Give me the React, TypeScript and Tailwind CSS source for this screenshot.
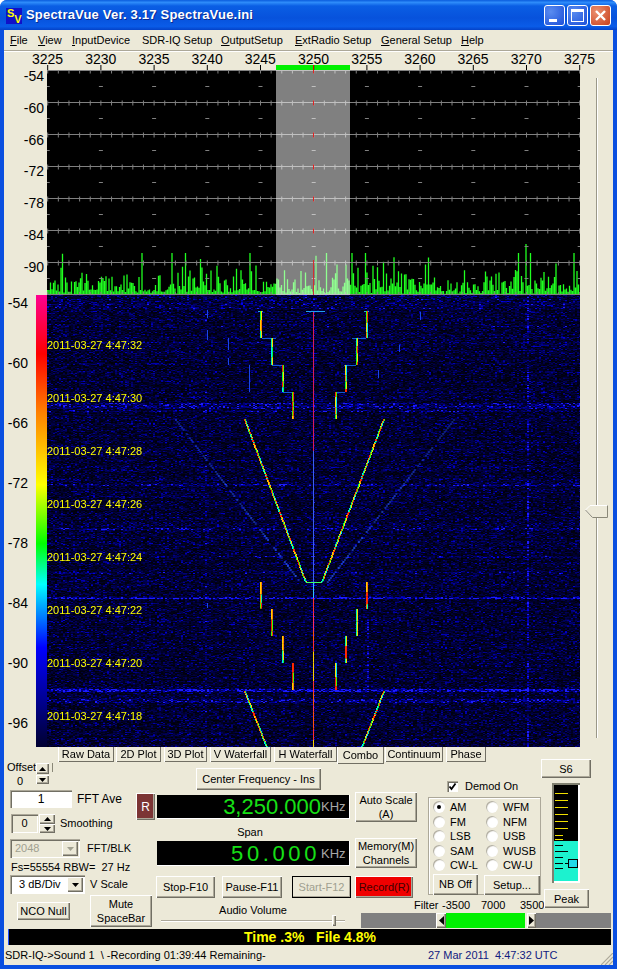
import React, { useLayoutEffect, useRef } from "react";

function rng(seed: number) {
  let a = seed;
  return () => {
    a |= 0;
    a = (a + 0x6d2b79f5) | 0;
    let t = Math.imul(a ^ (a >>> 15), 1 | a);
    t = (t + Math.imul(t ^ (t >>> 7), 61 | t)) ^ t;
    return ((t ^ (t >>> 14)) >>> 0) / 4294967296;
  };
}

const W = 533;
const H = 452;
const Y0 = 295;
const X0 = 47;
const rainbow = ["#ff2000", "#ff8000", "#ffe000", "#40ff00", "#00ffa0", "#00e0ff", "#ff3000", "#ffd000", "#00ff40"];

function bandGain(y: number) {
  const bands: [number, number, number][] = [
    [403, 408, 2.2], [410, 411, 1.6], [484, 485, 2.2], [597, 598, 3.2], [689, 691, 4.2], [699, 702, 2.2],
    [528, 529, 1.4], [556, 557, 1.3], [341, 342, 1.2], [325, 326, 1.2], [572, 573, 1.4],
  ];
  let g = 1;
  for (const [a, b, v] of bands) if (y >= a && y <= b) g = v;
  return g;
}

function colGain(x: number, y: number) {
  if (x >= 205 && x <= 206) return 1.5;
  if (x >= 526 && x <= 527) return y % 60 < 40 ? 3.2 : 1.8;
  if (x >= 313 && x <= 314) return 1.4;
  if (x >= 367 && x <= 368 && y > 620 && y < 690) return 2.4;
  return 1;
}

function drawWaterfall(c: CanvasRenderingContext2D) {
  const r = rng(4242);
  const off = document.createElement("canvas");
  off.width = W;
  off.height = H;
  const o = off.getContext("2d") as CanvasRenderingContext2D;
  o.fillStyle = "#000018";
  o.fillRect(0, 0, W, H);
  for (let py = 0; py < H; py += 1) {
    const rowG = 0.75 + r() * 0.5;
    for (let px = 0; px < W; px += 2) {
      const x = px + X0;
      const y = py + Y0;
      const v = r();
      let b = v < 0.35 ? 8 + r() * 24 : v < 0.84 ? 30 + r() * 55 : 85 + r() * 95;
      b *= rowG * bandGain(y) * colGain(x, y);
      if (py < 14) b *= 1.35;
      b = Math.min(255, b);
      const w = b > 245 ? 30 : 0;
      o.fillStyle = `rgb(${w},${w},${b | 0})`;
      o.fillRect(px, py, 2, 1);
    }
  }
  c.filter = "blur(0.55px)";
  c.drawImage(off, 0, 0);
  c.filter = "none";

  const seg = (x: number, y0: number, y1: number, s: number) => {
    const q = rng(s);
    let y = y0;
    while (y < y1) {
      const l = 4 + q() * 10;
      const k = Math.floor(q() * rainbow.length);
      c.fillStyle = rainbow[k];
      c.fillRect(x - X0, y - Y0, 1, Math.min(l, y1 - y));
      c.fillStyle = rainbow[(k + 3) % rainbow.length];
      c.fillRect(x + 1 - X0, y - Y0, 1, Math.min(l, y1 - y));
      y += l;
    }
  };
  const thin = (x: number, y0: number, y1: number, s: number) => {
    const q = rng(s);
    let y = y0;
    while (y < y1) {
      const l = 5 + q() * 14;
      c.fillStyle = ["#ff3030", "#ffd000", "#ff3060", "#e0e020", "#ff5010", "#40e080"][Math.floor(q() * 6)];
      c.fillRect(x - X0, y - Y0, 1, Math.min(l, y1 - y));
      y += l;
    }
  };
  const diag = (x0: number, y0: number, x1: number, y1: number, s: number) => {
    const q = rng(s);
    const n = Math.abs(y1 - y0);
    for (let i = 0; i < n; i += 1) {
      const k = Math.floor(i / 4 + q() * 1.5) % rainbow.length;
      const x = Math.round(x0 + ((x1 - x0) * i) / n) - X0;
      c.fillStyle = rainbow[k];
      c.fillRect(x, y0 + i - Y0, 1, 1);
      c.fillStyle = rainbow[(k + 3) % rainbow.length];
      c.fillRect(x + 1, y0 + i - Y0, 1, 1);
    }
  };
  const faint = (x0: number, y0: number, x1: number, y1: number, s: number) => {
    const q = rng(s);
    const n = Math.abs(y1 - y0);
    for (let i = 0; i < n; i += 2) {
      if (q() < 0.2) continue;
      c.fillStyle = `rgba(40,90,255,${0.35 + 0.5 * (i / n) * q()})`;
      c.fillRect(x0 + ((x1 - x0) * i) / n - X0, y0 + i - Y0, 2, 2);
    }
  };
  const fv = (x: number, y0: number, y1: number) => {
    c.fillStyle = "#1a48e8";
    c.fillRect(x - X0, y0 - Y0, 1, y1 - y0);
  };
  faint(175, 419, 300, 582, 1);
  faint(453, 419, 326, 582, 2);
  fv(207, 310, 318); fv(207, 330, 340); fv(228, 338, 350); fv(228, 358, 365); fv(249, 365, 392);
  fv(420, 312, 320); fv(399, 345, 352); fv(378, 370, 378); fv(207, 603, 608);
  // center line
  c.fillStyle = "#d81c5c";
  c.fillRect(313 - X0, 311 - Y0, 1, 140);
  c.fillStyle = "#3a60f0";
  c.fillRect(313 - X0, 451 - Y0, 1, 131);
  c.fillStyle = "#30c0ff";
  c.fillRect(313 - X0, 582 - Y0, 1, 16);
  thin(313, 598, 747, 91);
  // horizontals
  c.fillStyle = "#20a0f0";
  c.fillRect(306 - X0, 311 - Y0, 19, 1);
  c.fillRect(258 - X0, 311 - Y0, 5, 1);
  c.fillRect(364 - X0, 311 - Y0, 5, 1);
  c.fillStyle = "#1058d8";
  c.fillRect(262 - X0, 338 - Y0, 14, 1);
  c.fillRect(352 - X0, 338 - Y0, 14, 1);
  c.fillRect(272 - X0, 365 - Y0, 12, 1);
  c.fillRect(344 - X0, 365 - Y0, 12, 1);
  c.fillRect(283 - X0, 392 - Y0, 10, 1);
  c.fillRect(335 - X0, 392 - Y0, 10, 1);
  c.fillStyle = "#40ff60";
  c.fillRect(306 - X0, 582 - Y0, 16, 1);
  const stairsL = [260, 271, 282, 292];
  const stairsR = [366, 356, 345, 335];
  stairsL.forEach((x, i) => {
    seg(x, 311 + i * 27, 338 + i * 27, 10 + i);
    seg(x, 582 + i * 27, 609 + i * 27, 30 + i);
  });
  stairsR.forEach((x, i) => {
    seg(x, 311 + i * 27, 338 + i * 27, 20 + i);
    seg(x, 582 + i * 27, 609 + i * 27, 40 + i);
  });
  diag(244, 419, 305, 582, 51);
  diag(383, 419, 321, 582, 52);
  diag(244, 691, 266, 747, 53);
  diag(383, 691, 361, 747, 54);
}

function spectrumPath() {
  const r = rng(777);
  let d = "";
  for (let x = 0.5; x < W; x += 1.5) {
    let h = 3 + -Math.log(1 - r()) * 9.5;
    if (r() < 0.12) h *= 0.35;
    if (h > 42) h = 42;
    d += `M${x.toFixed(1)} 225V${(225 - h).toFixed(1)}`;
  }
  d += "M479 225V174";
  return d;
}
const specD = spectrumPath();

const kx = Array.from({ length: 11 }, (_, i) => 0.7 + i * 53.2);
const ticks = Array.from({ length: 51 }, (_, i) => 0.7 + i * 10.64);
const gridYs = [0.5, 32.5, 64.5, 96.5, 128.5, 160.5, 192.5];

function Spectrum() {
  return (
    <svg width={W} height={225} className="block bg-black">
      <path d={specD} stroke="#20ff20" strokeWidth={1.3} fill="none" />
      {gridYs.map((y) => (
        <g key={y}>
          <line x1={0} x2={W} y1={y} y2={y} stroke="#808080" />
          {ticks.map((t) => (
            <line key={t} x1={t} x2={t} y1={y - 2} y2={y + 3} stroke="#808080" />
          ))}
          {kx.map((t) => (
            <line key={t} x1={t - 2} x2={t + 2} y1={y + 16} y2={y + 16} stroke="#808080" />
          ))}
        </g>
      ))}
      <line x1={0} x2={W} y1={224.5} y2={224.5} stroke="#808080" />
      {ticks.map((t) => (
        <line key={t} x1={t} x2={t} y1={222} y2={225} stroke="#808080" />
      ))}
      <rect x={229} y={0} width={74} height={225} fill="#ffffff" fillOpacity={0.5} />
      {gridYs.map((y) => (
        <line key={y} x1={266.5} x2={266.5} y1={y - 2} y2={y + 3} stroke="#e02020" />
      ))}
      <line x1={266.5} x2={266.5} y1={190} y2={225} stroke="#d03030" />
    </svg>
  );
}

function Waterfall() {
  const ref = useRef<HTMLCanvasElement>(null);
  useLayoutEffect(() => {
    const c = ref.current?.getContext("2d");
    if (c) drawWaterfall(c);
  }, []);
  const stamps = ["32", "30", "28", "26", "24", "22", "20", "18"];
  return (
    <div className="relative w-[533px] h-[452px]">
      <canvas ref={ref} width={W} height={H} className="block" />
      <div className="absolute left-0 top-[43px] flex flex-col text-[#ffff00]">
        {stamps.map((s) => (
          <div key={s} className="h-[53px] text-[11px] leading-[15px] whitespace-pre">{`2011-03-27 4:47:${s}`}</div>
        ))}
      </div>
    </div>
  );
}

const raised = "bg-[#ECE9D8] shadow-[inset_1px_1px_0_#ffffff,inset_-1px_-1px_0_#716f64,inset_-2px_-2px_0_#aca899]";
const sunken = "shadow-[inset_1px_1px_0_#aca899,inset_2px_2px_0_#716f64,inset_-1px_-1px_0_#ffffff]";

function Btn({ className, children }: { className: string; children: React.ReactNode }) {
  return (
    <div className={`${raised} flex items-center justify-center text-center leading-[14px] shrink-0 ${className}`}>{children}</div>
  );
}

function Tri({ up, color = "#000" }: { up?: boolean; color?: string }) {
  return (
    <svg width={7} height={4} viewBox="0 0 7 4">
      <path d={up ? "M3.5 0L7 4H0z" : "M0 0H7L3.5 4z"} fill={color} />
    </svg>
  );
}

function Radio({ label, on }: { label: string; on?: boolean }) {
  return (
    <div className="flex items-center h-[14.5px] whitespace-nowrap">
      <div className="w-[12px] h-[12px] rounded-full bg-white shadow-[inset_1px_1px_1px_#aca899] flex items-center justify-center mr-[5px]">
        {on && <div className="w-[4px] h-[4px] rounded-full bg-black" />}
      </div>
      <span>{label}</span>
    </div>
  );
}

function Combo({ className, label, disabled }: { className: string; label: string; disabled?: boolean }) {
  return (
    <div className={`flex items-center justify-between shrink-0 p-[2px] ${sunken} ${className}`}>
      <span className={`pl-[3px] ${disabled ? "text-[#a0a090]" : "text-black pl-[7px]"}`}>{label}</span>
      <div className={`${raised} w-[16px] h-full flex items-center justify-center`}>
        <Tri color={disabled ? "#a0a090" : "#000"} />
      </div>
    </div>
  );
}

function Meter() {
  const yellow = [8, 15, 22, 29, 36, 43];
  return (
    <div className={`w-[28px] h-[100px] p-[2px] ml-[11px] mt-[5px] bg-[#ECE9D8] shadow-[inset_2px_2px_0_#808070,inset_-2px_-2px_0_#ffffff]`}>
      <svg width={24} height={96} className="block">
        <rect width={24} height={56} fill="#000" />
        <rect y={56} width={24} height={40} fill="#1cf2cf" />
        {yellow.map((y) => (
          <rect key={y} x={1} y={y} width={13} height={1} fill="#f0e000" />
        ))}
        <rect x={1} y={50} width={8} height={1} fill="#f0e000" />
        <rect x={1} y={54} width={8} height={1} fill="#f0e000" />
        {[60, 72, 78, 83].map((y) => (
          <rect key={y} x={1} y={y} width={8} height={1} fill="#000" />
        ))}
        <rect x={1} y={66} width={13} height={1} fill="#000" />
        <rect x={14.5} y={74.5} width={9} height={8} fill="#20d8e8" stroke="#000" />
        <rect x={11} y={78} width={4} height={1} fill="#000" />
      </svg>
    </div>
  );
}

const menus: [string, string, string][] = [
  ["F", "ile", "w-[28px]"],
  ["V", "iew", "w-[34px]"],
  ["I", "nputDevice", "w-[70px]"],
  ["", "SDR-IQ Setup", "w-[79px]"],
  ["O", "utputSetup", "w-[74px]"],
  ["E", "xtRadio Setup", "w-[86px]"],
  ["G", "eneral Setup", "w-[80px]"],
  ["H", "elp", "w-[30px]"],
];

const tabs: [string, string][] = [
  ["Raw Data", "w-[56px] mr-[2px]"],
  ["2D Plot", "w-[45px] mr-[3px]"],
  ["3D Plot", "w-[43px] mr-[3px]"],
  ["V Waterfall", "w-[61px] mr-[3px]"],
  ["H Waterfall", "w-[63px]"],
];

const topLabels = ["-54", "-60", "-66", "-72", "-78", "-84", "-90"];
const lowLabels = ["-54", "-60", "-66", "-72", "-78", "-84", "-90", "-96"];
const xLabels = ["3225", "3230", "3235", "3240", "3245", "3250", "3255", "3260", "3265", "3270", "3275"];

export default function App() {
  return (
    <div className="w-[617px] h-[969px] overflow-hidden bg-[#0A4FE0] flex flex-col font-['Liberation_Sans',Arial,sans-serif] text-[11px] text-black rounded-t-[7px]">
      {/* Title bar */}
      <div className="h-[30px] shrink-0 flex items-center pl-[6px] pr-[6px] bg-[linear-gradient(to_bottom,#0A5CDD_0%,#2E8CFA_8%,#0A5EE4_20%,#0752DC_60%,#0A5CE8_88%,#0442C8_100%)]">
        <div className="w-[16px] h-[16px] bg-[#1010C8] flex justify-between px-[1px] text-[#ffff00] font-bold text-[11px] leading-[10px] mt-[1px]">
          <span className="self-start">S</span>
          <span className="self-end">V</span>
        </div>
        <div className="ml-[4px] text-white font-bold text-[13px] tracking-[0.2px] [text-shadow:1px_1px_0_#0a2a90] whitespace-nowrap">
          SpectraVue Ver. 3.17 SpectraVue.ini
        </div>
        <div className="ml-auto flex gap-[2px]">
          <div className="w-[21px] h-[21px] rounded-[3px] border border-white bg-[radial-gradient(circle_at_30%_30%,#5a8cf0,#1c4fd8)] flex items-end pl-[4px] pb-[3px]">
            <div className="w-[8px] h-[3px] bg-white" />
          </div>
          <div className="w-[21px] h-[21px] rounded-[3px] border border-white bg-[radial-gradient(circle_at_30%_30%,#5a8cf0,#1c4fd8)] flex items-center justify-center">
            <div className="w-[13px] h-[13px] border border-white border-t-[3px]" />
          </div>
          <div className="w-[21px] h-[21px] rounded-[3px] border border-white bg-[radial-gradient(circle_at_30%_30%,#ec9070,#c8401c)] flex items-center justify-center">
            <svg width={13} height={13} viewBox="0 0 13 13">
              <path d="M2 2L11 11M11 2L2 11" stroke="#fff" strokeWidth={2.4} />
            </svg>
          </div>
        </div>
      </div>

      {/* Client */}
      <div className="mx-[4px] w-[609px] h-[935px] bg-[#ECE9D8] flex flex-col shrink-0">
        <div className="h-[20px] flex items-center pl-[6px] shrink-0">
          {menus.map(([u, rest, w]) => (
            <div key={rest} className={`${w} whitespace-nowrap`}>
              <span className="underline">{u}</span>
              {rest}
            </div>
          ))}
        </div>
        <div className="h-[2px] shrink-0 bg-[#aca899] border-b border-white" />

        {/* X axis */}
        <div className="h-[18px] shrink-0">
          <div className="h-[13px] flex ml-[17px] text-[14px] leading-[14px]">
            {xLabels.map((l) => (
              <div key={l} className="w-[53.2px] shrink-0 text-center">{l}</div>
            ))}
          </div>
          <svg width={540} height={5} className="block ml-[43px]">
            <rect x={229} y={0} width={74} height={5} fill="#00f000" />
            {kx.map((t) => (
              <line key={t} x1={t} x2={t} y1={0} y2={5} stroke="#000" />
            ))}
            <line x1={266.5} x2={266.5} y1={0} y2={5} stroke="#e00000" />
          </svg>
        </div>

        {/* Plot */}
        <div className="flex h-[677px] shrink-0">
          <div className="w-[576px] flex flex-col shrink-0">
            <div className="flex h-[225px]">
              <div className="w-[43px] shrink-0 -mt-[2px] pr-[3px] text-[14px] leading-[16px] text-right">
                {topLabels.map((l) => (
                  <div key={l} className="h-[31.8px]">{l}</div>
                ))}
              </div>
              <Spectrum />
            </div>
            <div className="flex h-[452px]">
              <div className="w-[32px] shrink-0 pr-[8px] text-[14px] leading-[16px] text-right">
                {lowLabels.map((l) => (
                  <div key={l} className="h-[60px]">{l}</div>
                ))}
              </div>
              <div className="w-[11px] h-[452px] shrink-0 bg-[linear-gradient(to_bottom,#ff0090_0%,#ff0000_13%,#ff8000_26%,#ffc000_34%,#ffff00_42%,#00ff00_55%,#00ffff_64%,#0000ff_78%,#000030_100%)]" />
              <Waterfall />
            </div>
          </div>
          <div className="relative ml-[16px] mt-[8px] w-[2px] h-[660px] bg-[#9a9888] border-r border-white">
            <svg width={23} height={13} className="absolute left-[-11px] top-[427px]">
              <path d="M0.5 5L5 0.5H22.5V12.5H7.5z" fill="#ECE9D8" stroke="#fff" />
              <path d="M0.5 5L7.5 12.5H22.5V0.5" fill="none" stroke="#8a8878" />
            </svg>
          </div>
        </div>

        {/* Tabs */}
        <div className="h-[15px] flex pl-[54px] shrink-0 relative">
          {tabs.map(([t, c]) => (
            <div key={t} className={`${c} h-[15px] flex items-center justify-center bg-[#ECE9D8] shadow-[inset_1px_0_0_#ffffff,inset_-1px_-1px_0_#716f64] whitespace-nowrap`}>{t}</div>
          ))}
          <div className="w-[47px] h-[17px] flex items-center justify-center bg-[#ECE9D8] shadow-[inset_1px_0_0_#ffffff,inset_-1px_-1px_0_#716f64]">Combo</div>
          <div className="w-[58px] ml-[1px] h-[15px] flex items-center justify-center shadow-[inset_1px_0_0_#ffffff,inset_-1px_-1px_0_#716f64]">Continuum</div>
          <div className="w-[40px] ml-[3px] h-[15px] flex items-center justify-center shadow-[inset_1px_0_0_#ffffff,inset_-1px_-1px_0_#716f64]">Phase</div>
        </div>

        {/* Controls */}
        <div className="flex h-[167px] shrink-0">
          {/* Left column */}
          <div className="w-[151px] shrink-0 flex flex-col">
            <div className="flex h-[23px]">
              <div className="w-[29px] pl-[3px] text-center leading-[11px]">
                <div>Offset</div>
                <div className="mt-[3px]">0</div>
              </div>
              <div className="ml-[3px] mt-[1px] flex flex-col gap-[1px]">
                <Btn className="w-[13px] h-[11px]"><Tri up /></Btn>
                <Btn className="w-[13px] h-[9px]"><Tri /></Btn>
              </div>
              <div className="ml-[3px] mt-[1px] w-[1px] h-[9px] bg-[#8a8878]" />
            </div>
            <div className="flex mt-[5px]">
              <div className="w-[132px] shrink-0">
                <div className="flex items-center">
                  <div className={`ml-[6px] w-[62px] h-[18px] bg-white flex items-center justify-center text-[12px] ${sunken}`}>1</div>
                  <span className="ml-[5px] text-[12px]">FFT Ave</span>
                </div>
                <div className="flex items-center mt-[6px]">
                  <div className={`ml-[7px] w-[27px] h-[19px] flex items-center justify-center ${sunken}`}>0</div>
                  <div className="ml-[1px] flex flex-col">
                    <Btn className="w-[16px] h-[10px]"><Tri up /></Btn>
                    <Btn className="w-[16px] h-[9px]"><Tri /></Btn>
                  </div>
                  <span className="ml-[5px]">Smoothing</span>
                </div>
              </div>
              <Btn className="w-[19px] h-[27px] mt-[3px] !bg-[#7c3535] text-white text-[12px]">R</Btn>
            </div>
            <div className="flex items-center mt-[6px]">
              <Combo className="ml-[6px] w-[70px] h-[19px]" label="2048" disabled />
              <span className="ml-[7px]">FFT/BLK</span>
            </div>
            <div className="h-[14px] leading-[16px] ml-[7px] mt-[1px] whitespace-pre">{"Fs=55554 RBW=  27 Hz"}</div>
            <div className="flex items-center mt-[2px]">
              <Combo className="ml-[6px] w-[75px] h-[19px] bg-white" label="3 dB/Div" />
              <span className="ml-[5px]">V Scale</span>
            </div>
            <div className="flex mt-[1px]">
              <Btn className="ml-[13px] mt-[7px] w-[53px] h-[18px]">NCO Null</Btn>
              <Btn className="ml-[20px] w-[62px] h-[32px]">
                Mute
                <br />
                SpaceBar
              </Btn>
            </div>
          </div>

          {/* Center column */}
          <div className="w-[197px] shrink-0 flex flex-col">
            <Btn className="ml-[41px] mt-[6px] w-[125px] h-[22px]">Center Frequency - Ins</Btn>
            <div className="ml-[2px] mt-[5px] w-[193px] h-[24px] bg-black shadow-[inset_-1px_-1px_0_#ffffff] flex items-center justify-end pr-[3px]">
              <span className="text-[#16e016] text-[22px] leading-[24px]">3,250.000</span>
              <span className="text-[#a8a8a8] text-[13px] leading-[24px] w-[26px]">KHz</span>
            </div>
            <div className="mt-[6px] h-[14px] leading-[14px] w-[190px] text-center ml-[0px]">Span</div>
            <div className="ml-[2px] mt-[2px] w-[193px] h-[25px] bg-black shadow-[inset_-1px_-1px_0_#ffffff] flex items-center justify-end pr-[3px]">
              <span className="text-[#16e016] text-[22px] leading-[24px] tracking-[3.6px]">50.000</span>
              <span className="text-[#a8a8a8] text-[13px] leading-[24px] w-[26px] ml-[1px]">KHz</span>
            </div>
            <div className="flex mt-[10px] ml-[1px]">
              <Btn className="w-[59px] h-[22px]">Stop-F10</Btn>
              <Btn className="w-[60px] h-[22px] ml-[7px]">Pause-F11</Btn>
              <Btn className="w-[59px] h-[22px] ml-[10px] outline outline-1 outline-black -outline-offset-1 text-[#a0a090]">Start-F12</Btn>
            </div>
            <div className="h-[14px] mt-[5px] leading-[14px] w-[196px] text-center">Audio Volume</div>
            <div className="relative ml-[6px] mt-[3px] w-[184px] h-[2px] bg-[#aca899] border-b border-white">
              <div className={`${raised} absolute left-[171px] top-[-5px] w-[4px] h-[11px]`} />
            </div>
          </div>

          {/* Right big column */}
          <div className="w-[261px] shrink-0 flex flex-col">
            <div className="flex h-[151px]">
              <div className="w-[189px] shrink-0 flex flex-col">
                <div className="flex">
                  <div className="ml-[3px] w-[62px] shrink-0 flex flex-col">
                    <Btn className="mt-[30px] w-[62px] h-[30px]">
                      Auto Scale
                      <br />
                      (A)
                    </Btn>
                    <Btn className="mt-[16px] w-[62px] h-[30px]">
                      Memory(M)
                      <br />
                      Channels
                    </Btn>
                    <Btn className="mt-[8px] w-[58px] h-[22px] !bg-[#f00000] text-[#400000]">Record(R)</Btn>
                  </div>
                  <div className="ml-[11px] w-[113px] shrink-0 flex flex-col">
                    <div className="flex items-center mt-[19px] h-[11px] ml-[19px]">
                      <div className={`w-[11px] h-[11px] bg-white flex items-center justify-center ${sunken}`}>
                        <svg width={9} height={9} viewBox="0 0 9 9">
                          <path d="M1.5 4.5L3.5 7L7.5 1.5" stroke="#000" strokeWidth={1.8} fill="none" />
                        </svg>
                      </div>
                      <span className="ml-[7px]">Demod On</span>
                    </div>
                    <div className="mt-[5px] w-[113px] h-[98px] shadow-[inset_1px_1px_0_#aca899,inset_-1px_-1px_0_#aca899,inset_2px_2px_0_#ffffff] pt-[3px] pl-[5px]">
                      <div className="grid grid-cols-[53px_53px]">
                        <Radio label="AM" on />
                        <Radio label="WFM" />
                        <Radio label="FM" />
                        <Radio label="NFM" />
                        <Radio label="LSB" />
                        <Radio label="USB" />
                        <Radio label="SAM" />
                        <Radio label="WUSB" />
                        <Radio label="CW-L" />
                        <Radio label="CW-U" />
                      </div>
                      <div className="flex mt-[1px]">
                        <Btn className="w-[45px] h-[21px]">NB Off</Btn>
                        <Btn className="w-[56px] h-[20px] ml-[6px] mt-[1px]">Setup...</Btn>
                      </div>
                    </div>
                  </div>
                </div>
                <div className="mt-[1px] h-[13px] whitespace-nowrap flex ml-[62px] leading-[13px]">
                  <span className="w-[28px] shrink-0">Filter</span>
                  <span className="w-[39px] shrink-0">-3500</span>
                  <span className="w-[39px] shrink-0">7000</span>
                  <span className="shrink-0">3500</span>
                </div>
              </div>
              <div className="w-[72px] shrink-0 flex flex-col -mt-[3px]">
                <Btn className="w-[50px] h-[19px]">S6</Btn>
                <Meter />
                <Btn className="ml-[3px] mt-[6px] w-[45px] h-[19px]">Peak</Btn>
              </div>
            </div>
            <div className="ml-[9px] w-[250px] h-[15px] bg-[#808080] flex pl-[75px]">
              <Btn className="w-[10px] h-[15px]">
                <svg width={5} height={9}><path d="M5 0V9L0 4.5z" fill="#000" /></svg>
              </Btn>
              <div className="w-[79px] h-[15px] bg-[#00f000]" />
              <div className="w-[2px] h-[15px] bg-[#ECE9D8]" />
              <Btn className="w-[9px] h-[15px]">
                <svg width={5} height={9}><path d="M0 0V9L5 4.5z" fill="#000" /></svg>
              </Btn>
            </div>
          </div>
        </div>

        {/* Progress */}
        <div className="ml-[4px] w-[603px] h-[16px] shrink-0 bg-black border-l border-[#2050ff] flex items-center justify-center text-[#ffff00] font-bold text-[14px] whitespace-pre">
          {"Time .3%   File 4.8%"}
        </div>

        {/* Status */}
        <div className="h-[20px] shrink-0 flex items-center pl-[1px] whitespace-pre relative">
          <span className="w-[423px] text-[11px]">{"SDR-IQ->Sound 1  \\ -Recording 01:39:44 Remaining-"}</span>
          <span className="text-[#102080]">{"27 Mar 2011  4:47:32 UTC"}</span>
          <svg width={12} height={12} className="ml-auto mt-[8px]">
            <path d="M0 12L12 0M4 12L12 4M8 12L12 8" stroke="#aca899" strokeWidth={1.2} />
          </svg>
        </div>
      </div>
    </div>
  );
}
